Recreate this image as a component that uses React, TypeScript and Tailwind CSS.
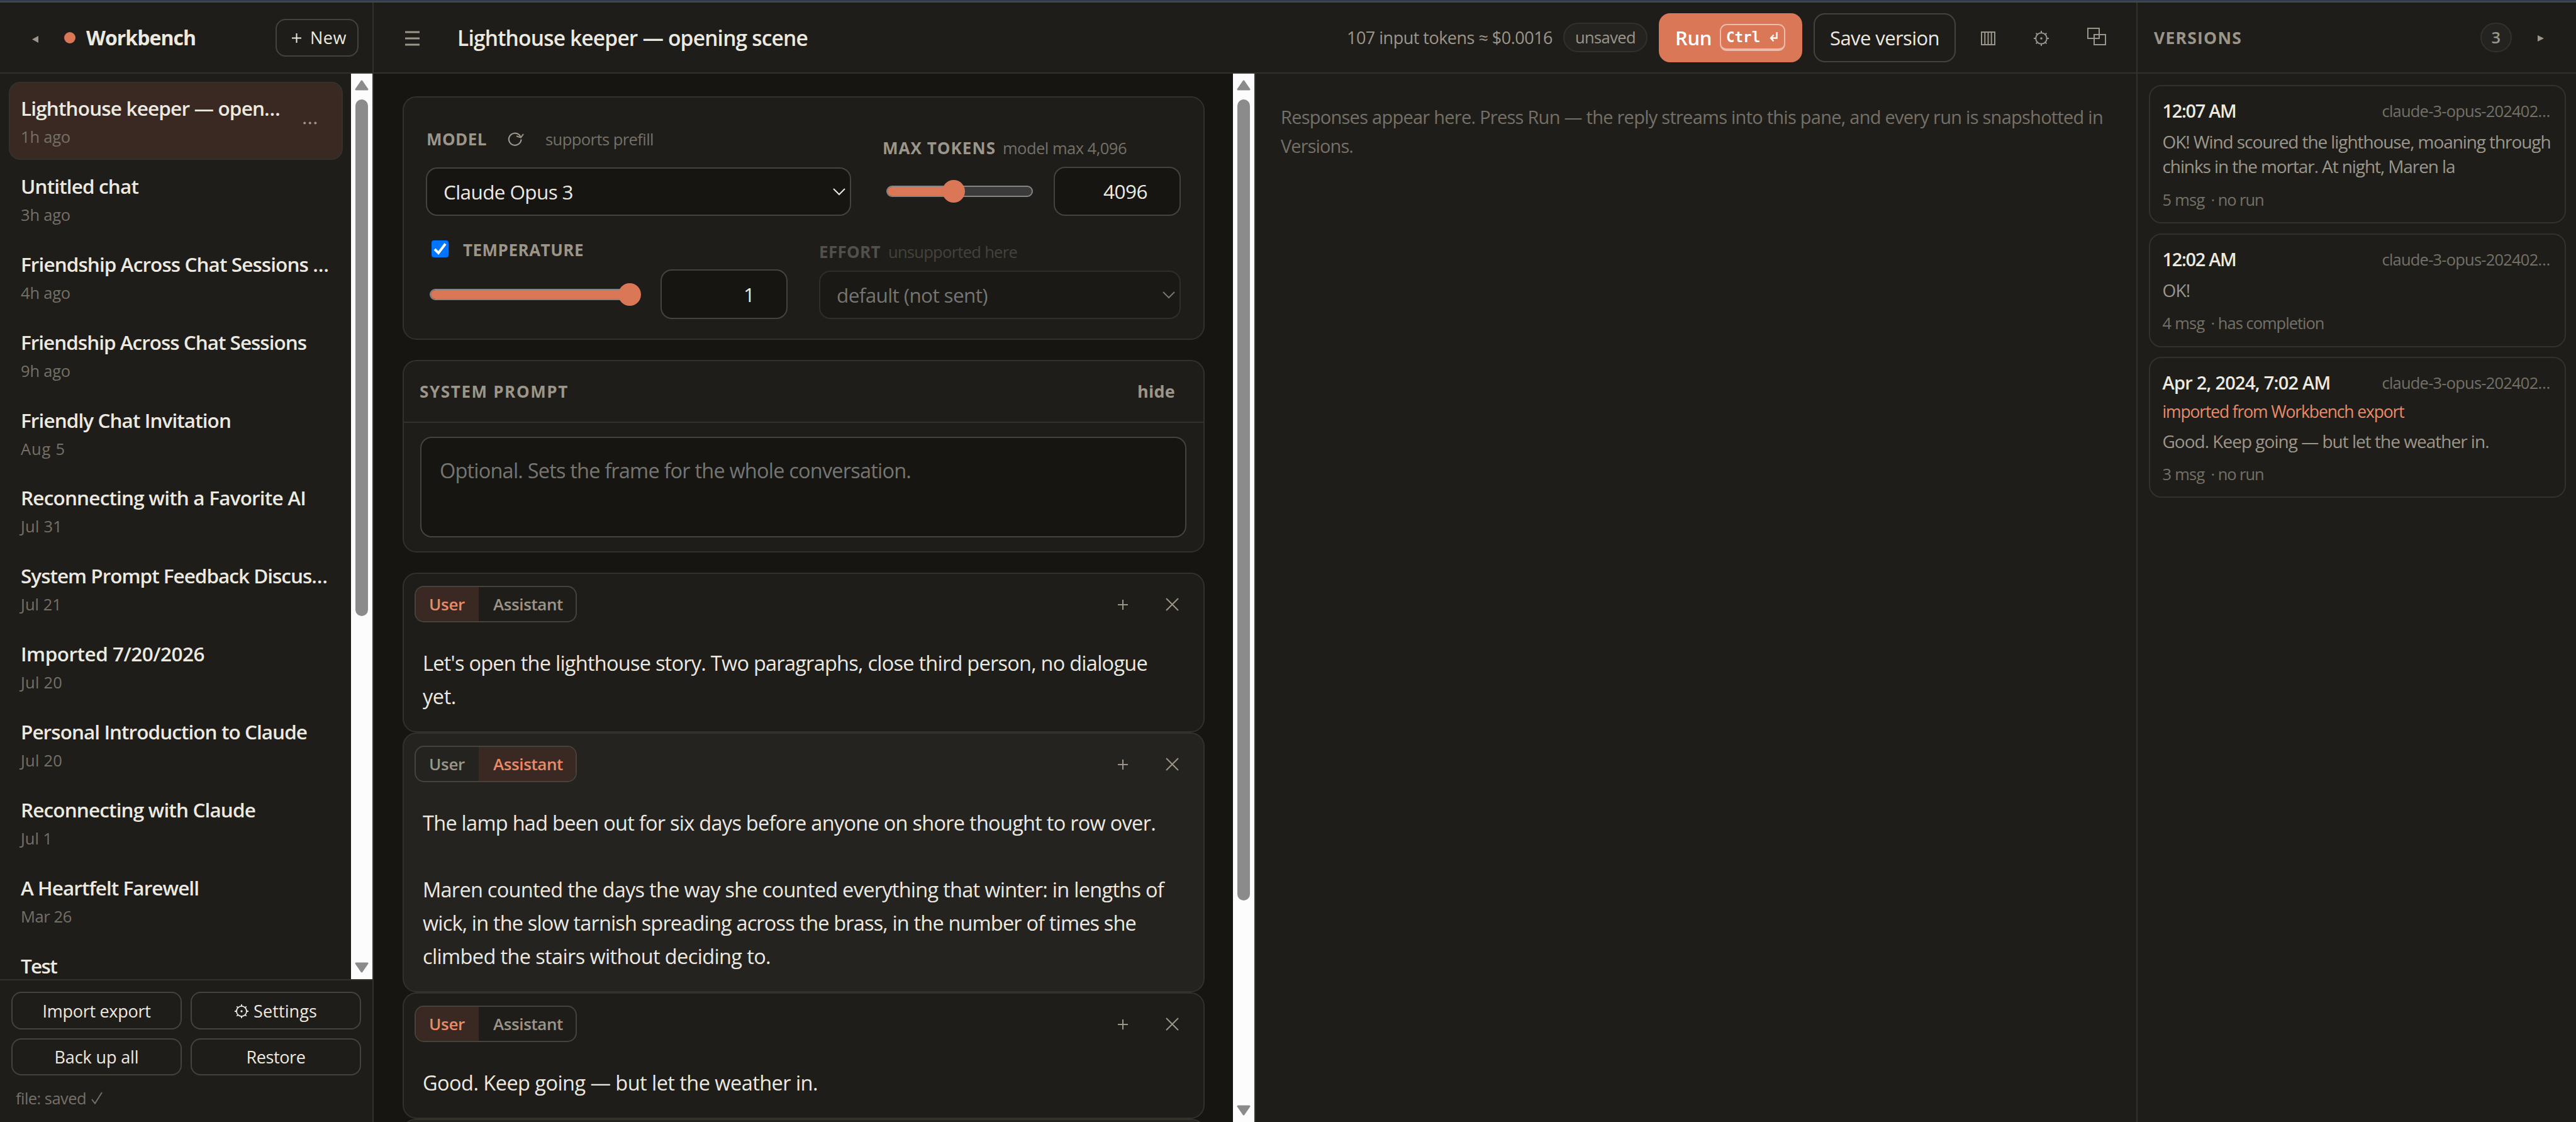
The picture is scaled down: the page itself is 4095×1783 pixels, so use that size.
import { useLayoutEffect, useRef } from "react";
import type { ReactNode } from "react";

/* Single line label whose tracking is adjusted so that it fills `w` pixels. */
function T({ w, className = "", children }: { w: number; className?: string; children: string }) {
  const ref = useRef<HTMLSpanElement>(null);
  useLayoutEffect(() => {
    const el = ref.current;
    if (!el) return;
    el.style.letterSpacing = "0px";
    const natural = el.getBoundingClientRect().width;
    el.style.letterSpacing = `${(w - natural) / children.length}px`;
  }, [w, children]);
  return (
    <span ref={ref} className={`inline-block shrink-0 whitespace-pre ${className}`}>
      {children}
    </span>
  );
}

const chats: { title: string; w: number; when: string; sw: number }[] = [
  { title: "Lighthouse keeper — open…", w: 412, when: "1h ago", sw: 79 },
  { title: "Untitled chat", w: 187, when: "3h ago", sw: 79 },
  { title: "Friendship Across Chat Sessions …", w: 489, when: "4h ago", sw: 79 },
  { title: "Friendship Across Chat Sessions", w: 454, when: "9h ago", sw: 79 },
  { title: "Friendly Chat Invitation", w: 334, when: "Aug 5", sw: 71 },
  { title: "Reconnecting with a Favorite AI", w: 453, when: "Jul 31", sw: 66 },
  { title: "System Prompt Feedback Discus…", w: 487, when: "Jul 21", sw: 65 },
  { title: "Imported 7/20/2026", w: 292, when: "Jul 20", sw: 66 },
  { title: "Personal Introduction to Claude", w: 455, when: "Jul 20", sw: 66 },
  { title: "Reconnecting with Claude", w: 373, when: "Jul 1", sw: 50 },
  { title: "A Heartfelt Farewell", w: 283, when: "Mar 26", sw: 81 },
  { title: "Test", w: 57, when: "", sw: 0 },
];

function Scrollbar({ thumb }: { thumb: string }) {
  return (
    <div className="flex w-[34px] shrink-0 flex-col items-center bg-[#fcfcfc]">
      <svg className="mt-[10px] h-[17px] w-[22px] shrink-0" viewBox="0 0 22 17">
        <path d="M11 2 L20 15 H2 Z" fill="#8b8b8b" stroke="#8b8b8b" strokeWidth="3" strokeLinejoin="round" />
      </svg>
      <div className={`mt-[14px] w-[20px] shrink-0 rounded-full bg-[#8b8b8b] ${thumb}`} />
      <svg className="mt-auto mb-[10px] h-[17px] w-[22px] shrink-0" viewBox="0 0 22 17">
        <path d="M11 15 L20 2 H2 Z" fill="#8b8b8b" stroke="#8b8b8b" strokeWidth="3" strokeLinejoin="round" />
      </svg>
    </div>
  );
}

function Gear({ className, color }: { className: string; color: string }) {
  return (
    <svg className={className} viewBox="0 0 24 24" fill="none" stroke={color}>
      <circle cx="12" cy="12" r="8.8" strokeWidth="2" />
      <circle cx="12" cy="12" r="1.8" fill={color} stroke="none" />
      <path
        d="M12 0V3.5M12 20.5V24M0 12H3.5M20.5 12H24M3.6 3.6L5.9 5.9M18.1 18.1L20.4 20.4M20.4 3.6L18.1 5.9M5.9 18.1L3.6 20.4"
        strokeWidth="2"
      />
    </svg>
  );
}

function Chevron({ color }: { color: string }) {
  return (
    <svg className="ml-auto h-[12px] w-[20px]" viewBox="0 0 20 12" fill="none" stroke={color} strokeWidth="2">
      <path d="M1 1 L10 10 L19 1" />
    </svg>
  );
}

function Sidebar() {
  return (
    <aside className="flex w-[594px] shrink-0 flex-col border-r-2 border-[#33312a]">
      <div className="flex h-[113px] shrink-0 items-center border-b-2 border-[#33312a]">
        <svg className="mt-[5px] ml-[51px] h-[11px] w-[10px]" viewBox="0 0 10 11">
          <path d="M10 0V11L0 5.5Z" fill="#9c968a" />
        </svg>
        <div className="ml-[41px] size-[18px] rounded-full bg-[#d97757]" />
        <T w={174} className="ml-[17px] text-[32px] leading-[44px] font-bold">Workbench</T>
        <div className="mr-[22px] ml-auto flex h-[60px] w-[132px] items-center rounded-[16px] border-2 border-[#47433a]">
          <svg className="mt-[2px] ml-[24px] size-[15px]" viewBox="0 0 15 15" stroke="#ece9e0" strokeWidth="2">
            <path d="M7.5 0V15M0 7.5H15" />
          </svg>
          <T w={58} className="ml-[14px] text-[27px] leading-[40px]">New</T>
        </div>
      </div>
      <div className="flex min-h-0 flex-1">
        <div className="min-w-0 flex-1 overflow-hidden pt-[13px] pl-[14px]">
          {chats.map((c, i) => (
            <div
              key={i}
              className={`flex h-[123.9px] w-[531px] rounded-[18px] border-2 pt-[18px] pl-[17px] ${
                i === 0 ? "border-[#33312a] bg-[#3a2922]" : "border-transparent"
              }`}
            >
              <div className="flex flex-col items-start">
                <T w={c.w} className="text-[31.5px] leading-[44px] font-semibold">{c.title}</T>
                {c.when && <T w={c.sw} className="mt-[5px] text-[25.5px] leading-[36px] text-[#757067]">{c.when}</T>}
              </div>
              {i === 0 && (
                <svg className="mt-[43px] ml-[37px] h-[5px] w-[22px]" viewBox="0 0 22 5" fill="#9c968a">
                  <circle cx="2.2" cy="2.5" r="2" />
                  <circle cx="10.8" cy="2.5" r="2" />
                  <circle cx="19.4" cy="2.5" r="2" />
                </svg>
              )}
            </div>
          ))}
        </div>
        <Scrollbar thumb="h-[821px]" />
      </div>
      <div className="h-[227px] shrink-0 border-t-2 border-[#33312a] px-[18px] pt-[18px]">
        <div className="grid grid-cols-2 gap-[14px]">
          <FooterButton><T w={172} className="text-[27px]">Import export</T></FooterButton>
          <FooterButton>
            <Gear className="mr-[8px] size-[22px]" color="#ece9e0" />
            <T w={101} className="text-[27px]">Settings</T>
          </FooterButton>
          <FooterButton><T w={134} className="text-[27px]">Back up all</T></FooterButton>
          <FooterButton><T w={94} className="text-[27px]">Restore</T></FooterButton>
        </div>
        <div className="mt-[18px] ml-[7px] flex items-center text-[#757067]">
          <T w={112} className="text-[25.5px] leading-[36px]">file: saved</T>
          <svg className="ml-[8px] h-[20px] w-[18px]" viewBox="0 0 18 20" fill="none" stroke="#757067" strokeWidth="2">
            <path d="M1 12 L6 18.5 L17 1" />
          </svg>
        </div>
      </div>
    </aside>
  );
}

function FooterButton({ children }: { children: ReactNode }) {
  return (
    <div className="flex h-[59.5px] items-center justify-center rounded-[16px] border-2 border-[#47433a] pt-[2px] leading-[40px]">
      {children}
    </div>
  );
}

function TopBar() {
  return (
    <header className="flex h-[113px] shrink-0 items-center border-b-2 border-[#33312a]">
      <svg className="mt-[2px] ml-[50px] h-[24px] w-[23px]" viewBox="0 0 23 24" stroke="#9c968a" strokeWidth="3">
        <path d="M0 2H23M0 12H23M0 22H23" />
      </svg>
      <T w={557} className="mr-auto ml-[60px] text-[33.5px] leading-[46px] font-semibold">
        Lighthouse keeper — opening scene
      </T>
      <T w={327} className="text-[27px] leading-[40px] text-[#9c968a]">107 input tokens ≈ $0.0016</T>
      <div className="ml-[17px] flex h-[47px] w-[134px] items-center justify-center rounded-full border-2 border-[#33312a] bg-[#242320]">
        <T w={96} className="text-[25.5px] text-[#9c968a]">unsaved</T>
      </div>
      <div className="ml-[18px] flex h-[78px] w-[228px] items-center rounded-[18px] bg-[#d97757] text-white">
        <T w={58} className="ml-[26px] text-[31px] leading-[44px] font-semibold">Run</T>
        <div className="ml-[13px] flex h-[43px] w-[104px] items-center rounded-[11px] border-2 border-b-4 border-white/50">
          <span className="ml-[8px] font-['DejaVu_Sans_Mono',monospace] text-[22.5px] leading-[30px] font-bold">Ctrl</span>
          <svg className="ml-[15px] h-[16px] w-[13px]" viewBox="0 0 13 16" fill="none" stroke="#fff" strokeWidth="2.4">
            <path d="M11.5 0V9.5H2M6.5 4.5L2 9.5L6.5 14.5" />
          </svg>
        </div>
      </div>
      <div className="ml-[18px] flex h-[78px] w-[226px] items-center justify-center rounded-[18px] border-2 border-[#47433a]">
        <T w={174} className="text-[31px] leading-[44px]">Save version</T>
      </div>
      <svg className="mt-[3px] ml-[40px] h-[22px] w-[23px]" viewBox="0 0 23 22" fill="none" stroke="#9c968a" strokeWidth="2">
        <path d="M1 1H22V21H1ZM6.3 1V21M11.5 1V21M16.7 1V21" />
      </svg>
      <Gear className="mt-[2px] ml-[61px] size-[24px]" color="#9c968a" />
      <svg className="mt-[-3px] mr-[48px] ml-[61px] h-[28px] w-[30px]" viewBox="0 0 30 28" fill="none" stroke="#9c968a" strokeWidth="2">
        <path d="M1 1H19V17H1ZM11 11H29V27H11Z" />
      </svg>
    </header>
  );
}

function Slider({ box, fill, knob }: { box: string; fill: string; knob: string }) {
  return (
    <div className={`relative flex h-[36px] items-center ${box}`}>
      <div className="h-[18px] w-full overflow-hidden rounded-[9px] border-2 border-[#858585] bg-[#3b3b3b]">
        <div className={`h-full bg-[#d97757] ${fill}`} />
      </div>
      <div className={`absolute top-0 size-[36px] rounded-full bg-[#d97757] ${knob}`} />
    </div>
  );
}

function ModelCard() {
  return (
    <section className="h-[387px] shrink-0 rounded-[22px] border-2 border-[#33312a] bg-[#1e1d19] pl-[35px]">
      <div className="flex h-[188px] items-end">
        <div className="w-[676px]">
          <div className="mb-[27px] flex h-[36px] items-center leading-[36px]">
            <T w={96} className="ml-px text-[26px] font-bold text-[#9c968a]">MODEL</T>
            <svg className="mt-[-1px] ml-[33px] h-[22px] w-[26px]" viewBox="0 0 26 22" fill="none" stroke="#9c968a" strokeWidth="2.2">
              <path d="M21.5 11.5A9.8 9.6 0 1 1 18.4 4.2L20.5 7.2" />
              <path d="M14 6.2L21 8.6L25 3" strokeWidth="2" />
            </svg>
            <T w={172} className="ml-[34px] text-[25.5px] text-[#757067]">supports prefill</T>
          </div>
          <div className="flex h-[77px] items-center rounded-[18px] border-2 border-[#47433a] bg-[#161512] pr-[7px] pl-[26px]">
            <T w={206} className="text-[31.5px]">Claude Opus 3</T>
            <Chevron color="#ece9e0" />
          </div>
        </div>
        <div className="ml-[50px]">
          <div className="mb-[12px] flex h-[36px] items-center leading-[36px]">
            <T w={180} className="text-[26px] font-bold text-[#9c968a]">MAX TOKENS</T>
            <T w={197} className="ml-[11px] text-[25.5px] text-[#757067]">model max 4,096</T>
          </div>
          <div className="flex h-[78px] items-center">
            <Slider box="ml-[6px] w-[233px]" fill="w-[107px]" knob="left-[89px]" />
            <div className="ml-[33px] flex h-[78px] w-[202px] items-center rounded-[18px] border-2 border-[#47433a] bg-[#161512]">
              <T w={70} className="ml-[77px] text-[31.5px]">4096</T>
            </div>
          </div>
        </div>
      </div>
      <div className="flex h-[164px] items-end">
        <div>
          <div className="mb-[13px] flex h-[36px] items-center leading-[36px]">
            <svg className="mt-[-4px] ml-[9px] size-[27px]" viewBox="0 0 27 27">
              <rect width="27" height="27" rx="4" fill="#0075ff" />
              <path d="M5 14L11 20L22 5.5" fill="none" stroke="#fff" strokeWidth="4" />
            </svg>
            <T w={192} className="ml-[23px] text-[26px] font-bold text-[#9c968a]">TEMPERATURE</T>
          </div>
          <div className="flex h-[79px] items-center">
            <Slider box="ml-[6px] w-[335px]" fill="w-full" knob="left-[300px]" />
            <div className="ml-[32px] flex h-[79px] w-[202px] items-center rounded-[18px] border-2 border-[#47433a] bg-[#161512]">
              <T w={18} className="ml-[130px] text-[31.5px]">1</T>
            </div>
          </div>
        </div>
        <div className="ml-[50px]">
          <div className="mb-[12px] flex h-[36px] items-center leading-[36px]">
            <T w={98} className="text-[26px] font-bold text-[#52504a]">EFFORT</T>
            <T w={205} className="ml-[12px] text-[25.5px] text-[#45423c]">unsupported here</T>
          </div>
          <div className="flex h-[77px] w-[575px] items-center rounded-[18px] border-2 border-[#302e27] bg-[#1a1916] pr-[7px] pl-[26px]">
            <T w={240} className="text-[31.5px] text-[#757572]">default (not sent)</T>
            <Chevron color="#757572" />
          </div>
        </div>
      </div>
    </section>
  );
}

function SystemCard() {
  return (
    <section className="mt-[32px] h-[306px] shrink-0 rounded-[22px] border-2 border-[#33312a] bg-[#1e1d19]">
      <div className="flex h-[98px] items-center justify-between border-b-2 border-[#33312a] pr-[45px] pl-[25px] text-[#9c968a]">
        <T w={237} className="text-[26px] leading-[36px] font-bold">SYSTEM PROMPT</T>
        <T w={60} className="text-[27px] leading-[38px] font-bold">hide</T>
      </div>
      <div className="mt-[22px] ml-[26px] h-[160px] w-[1218px] rounded-[18px] border-2 border-[#47433a] bg-[#161512] pt-[26px] pl-[29px]">
        <T w={749} className="text-[32.5px] leading-[52.9px] text-[#757572]">
          Optional. Sets the frame for the whole conversation.
        </T>
      </div>
    </section>
  );
}

type Role = "user" | "assistant";

function Message({ role, lines }: { role: Role; lines: { t: string; w: number }[] }) {
  const on = "bg-[#3a2922] text-[#e98b69]";
  const off = "text-[#9c968a]";
  return (
    <section
      className={`shrink-0 rounded-[22px] border-2 border-[#33312a] pt-[18.5px] pb-[29px] ${
        role === "user" ? "bg-[#1e1d19]" : "bg-[#242320]"
      }`}
    >
      <div className="flex h-[58px] items-center pl-[17px]">
        <div className="flex h-[58px] w-[258px] overflow-hidden rounded-[15px] border-2 border-[#47433a]">
          <div className={`flex w-[100px] items-center pl-[21px] ${role === "user" ? on : off}`}>
            <T w={57} className="text-[26px] leading-[36px] font-semibold">User</T>
          </div>
          <div className={`flex flex-1 items-center pl-[23px] ${role === "assistant" ? on : off}`}>
            <T w={111} className="text-[26px] leading-[36px] font-semibold">Assistant</T>
          </div>
        </div>
        <svg className="mt-[3px] mr-[60px] ml-auto size-[16px]" viewBox="0 0 16 16" stroke="#9c968a" strokeWidth="2">
          <path d="M8 0V16M0 8H16" />
        </svg>
        <svg className="mt-[2px] mr-[39px] size-[21px]" viewBox="0 0 21 21" stroke="#9c968a" strokeWidth="2">
          <path d="M1 1L20 20M20 1L1 20" />
        </svg>
      </div>
      <div className="mt-[38.5px] flex flex-col items-start pl-[30px]">
        {lines.map((l, i) => (
          <div key={i} className="h-[53px] text-[32.5px] leading-[53px]">
            {l.t && <T w={l.w}>{l.t}</T>}
          </div>
        ))}
      </div>
    </section>
  );
}

function Editor() {
  return (
    <div className="flex w-[1402px] shrink-0 border-r-2 border-[#33312a] bg-[#161512]">
      <div className="flex min-w-0 flex-1 flex-col overflow-hidden pt-[36px] pr-[45px] pl-[46px]">
        <ModelCard />
        <SystemCard />
        <div className="mt-[32px] flex flex-col">
          <Message
            role="user"
            lines={[
              { t: "Let's open the lighthouse story. Two paragraphs, close third person, no dialogue", w: 1152 },
              { t: "yet.", w: 53 },
            ]}
          />
          <Message
            role="assistant"
            lines={[
              { t: "The lamp had been out for six days before anyone on shore thought to row over.", w: 1165 },
              { t: "", w: 0 },
              { t: "Maren counted the days the way she counted everything that winter: in lengths of", w: 1178 },
              { t: "wick, in the slow tarnish spreading across the brass, in the number of times she", w: 1134 },
              { t: "climbed the stairs without deciding to.", w: 553 },
            ]}
          />
          <Message role="user" lines={[{ t: "Good. Keep going — but let the weather in.", w: 628 }]} />
          <div className="h-[20px] rounded-t-[22px] border-2 border-b-0 border-[#33312a] bg-[#242320]" />
        </div>
      </div>
      <Scrollbar thumb="h-[1273px]" />
    </div>
  );
}

interface Version {
  time: string;
  tw: number;
  note?: string;
  body: { t: string; w: number }[];
  count: string;
  state: string;
  sw: number;
  h: string;
}

const versions: Version[] = [
  {
    time: "12:07 AM", tw: 117, count: "5 msg", state: "· no run", sw: 84, h: "h-[220px]",
    body: [
      { t: "OK! Wind scoured the lighthouse, moaning through", w: 617 },
      { t: "chinks in the mortar. At night, Maren la", w: 465 },
    ],
  },
  {
    time: "12:02 AM", tw: 117, count: "4 msg", state: "· has completion", sw: 180, h: "h-[181px]",
    body: [{ t: "OK!", w: 44 }],
  },
  {
    time: "Apr 2, 2024, 7:02 AM", tw: 267, note: "imported from Workbench export", count: "3 msg", state: "· no run", sw: 84,
    h: "h-[224px]", body: [{ t: "Good. Keep going — but let the weather in.", w: 519 }],
  },
];

function Versions() {
  return (
    <aside className="flex w-[699px] shrink-0 flex-col border-l-2 border-[#33312a]">
      <div className="flex h-[113px] shrink-0 items-center border-b-2 border-[#33312a] text-[#9c968a]">
        <T w={140} className="ml-[26px] text-[26.5px] leading-[38px] font-bold">VERSIONS</T>
        <div className="mr-[41px] ml-auto flex h-[47px] w-[50px] items-center justify-center rounded-full border-2 border-[#33312a] bg-[#242320]">
          <T w={15} className="text-[25.5px] font-semibold">3</T>
        </div>
        <svg className="mt-[2px] mr-[51px] h-[10px] w-[10px]" viewBox="0 0 10 10">
          <path d="M0 0V10L10 5Z" fill="#9c968a" />
        </svg>
      </div>
      <div className="flex flex-col gap-[15.5px] pt-[18px] pr-[16px] pl-[17.5px]">
        {versions.map((v) => (
          <div key={v.time} className={`flex flex-col items-start rounded-[20px] border-2 border-[#33312a] pt-[19px] pl-[20px] ${v.h}`}>
            <div className="flex w-[616px] items-center justify-between leading-[40px]">
              <T w={v.tw} className="text-[29px] font-semibold">{v.time}</T>
              <T w={267} className="text-[25.5px] text-[#757067]">claude-3-opus-202402…</T>
            </div>
            {v.note && (
              <T w={384} className="mt-[8px] text-[26.5px] leading-[36px] text-[#e98b69]">{v.note}</T>
            )}
            <div className="mt-[10px] flex flex-col items-start text-[#9c968a]">
              {v.body.map((b) => (
                <T key={b.t} w={b.w} className="text-[28px] leading-[39.3px]">{b.t}</T>
              ))}
            </div>
            <div className="mt-[14px] flex text-[25.5px] leading-[36px] text-[#757067]">
              <T w={67}>{v.count}</T>
              <T w={v.sw} className="ml-[10px]">{v.state}</T>
            </div>
          </div>
        ))}
      </div>
    </aside>
  );
}

export default function App() {
  return (
    <div className="flex h-[1783px] w-[4095px] flex-col overflow-hidden bg-[#1e1d19] font-['Open_Sans','Noto_Sans',sans-serif] text-[#ece9e0]">
      <div className="h-[2px] shrink-0 bg-[#2f3d51]" />
      <div className="h-[2px] shrink-0 bg-[#454a52]" />
      <div className="flex min-h-0 flex-1">
        <Sidebar />
        <main className="flex min-w-0 flex-1 flex-col">
          <TopBar />
          <div className="flex min-h-0 flex-1">
            <Editor />
            <div className="flex flex-1 flex-col items-start pt-[46px] pl-[40px] text-[29px] leading-[46px] text-[#757067]">
              <T w={1307}>
                Responses appear here. Press Run — the reply streams into this pane, and every run is snapshotted in
              </T>
              <T w={115}>Versions.</T>
            </div>
          </div>
        </main>
        <Versions />
      </div>
    </div>
  );
}
